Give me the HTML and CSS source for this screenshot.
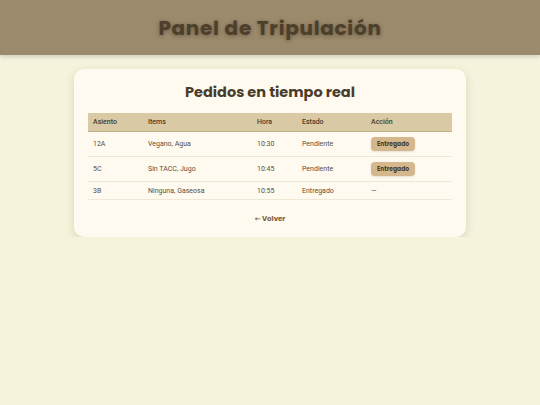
FILE: index.html
```html
<!DOCTYPE html>
<html lang="es">
  <head>
    <meta charset="UTF-8" />
    <meta name="viewport" content="width=device-width, initial-scale=1.0" />
    <title>Panel de Tripulación</title>
    <link rel="stylesheet" href="styles.css">
  </head>
  <body>
    <header class="top-bar">
      <h1>Panel de Tripulación</h1>
    </header>

    <main class="card">
      <h2>Pedidos en tiempo real</h2>
      <table class="orders">
        <thead>
          <tr>
            <th class="col-seat">Asiento</th>
            <th class="col-items">Items</th>
            <th class="col-time">Hora</th>
            <th class="col-state">Estado</th>
            <th>Acción</th>
          </tr>
        </thead>
        <tbody>
          <tr>
            <td>12A</td>
            <td>Vegano, Agua</td>
            <td>10:30</td>
            <td>Pendiente</td>
            <td><button class="deliver-btn">Entregado</button></td>
          </tr>
          <tr>
            <td>5C</td>
            <td>Sin TACC, Jugo</td>
            <td>10:45</td>
            <td>Pendiente</td>
            <td><button class="deliver-btn">Entregado</button></td>
          </tr>
          <tr>
            <td>3B</td>
            <td>Ninguna, Gaseosa</td>
            <td>10:55</td>
            <td>Entregado</td>
            <td>—</td>
          </tr>
        </tbody>
      </table>
      <a class="back-link" href="#">← Volver</a>
    </main>
  </body>
</html>
```

FILE: styles.css
```css
body {
  margin: 0;
  padding: 0;
  font-family: Roboto, "Liberation Sans", sans-serif;
  background: #f5f3dc;
  color: #4a3c2a;
}

/* Top bar with the panel title */
.top-bar {
  height: 55px;
  background: #9c8a6c;
  box-shadow: 0 2px 4px rgba(0, 0, 0, 0.15);
  display: flex;
  align-items: center;
  justify-content: center;
}

.top-bar h1 {
  margin: 0;
  font-family: Poppins, "DejaVu Sans", sans-serif;
  font-size: 20px;
  font-weight: bold;
  letter-spacing: 0.7px;
  color: #4d3f2b;
  text-shadow: 0 1px 4px rgba(40, 30, 15, 0.45);
}

/* Main card */
.card {
  width: 364px;
  margin: 14px auto 0;
  padding: 12px 14px 12px;
  background: #fffaef;
  border-radius: 10px;
  box-shadow: 0 3px 10px rgba(120, 115, 60, 0.22);
  text-align: center;
}

.card h2 {
  margin: 0 0 10px;
  font-family: Poppins, "DejaVu Sans", sans-serif;
  font-size: 14.5px;
  line-height: 22px;
  font-weight: bold;
  color: #4a3c2a;
}

.orders {
  width: 100%;
  border-collapse: collapse;
  font-family: Roboto, "Liberation Sans", sans-serif;
  font-size: 7px;
  text-align: left;
}

.orders th {
  background: #d9c9a5;
  font-weight: 500;
  height: 18px;
  padding: 0 5px;
  border-bottom: 1px solid #c4ae84;
  color: #4a3c2a;
}

.orders td {
  height: 24px;
  padding: 0 5px;
  border-bottom: 1px solid #efe8d6;
  color: #5b4d3b;
}

.orders tr:last-child td {
  height: 17px;
}

.col-seat { width: 45px; }
.col-items { width: 99px; }
.col-time { width: 35px; }
.col-state { width: 59px; }

.deliver-btn {
  font-family: Poppins, "DejaVu Sans", sans-serif;
  font-size: 6px;
  font-weight: bold;
  line-height: 8px;
  color: #4a3c2a;
  background: #d4b78c;
  border: none;
  border-radius: 4px;
  padding: 3px 6px;
  box-shadow: 0 1px 2px rgba(0, 0, 0, 0.1);
  cursor: pointer;
}

.back-link {
  display: inline-block;
  margin-top: 14px;
  font-family: Poppins, "DejaVu Sans", sans-serif;
  font-size: 7px;
  line-height: 10px;
  font-weight: bold;
  color: #7a6040;
  text-decoration: none;
}
```
